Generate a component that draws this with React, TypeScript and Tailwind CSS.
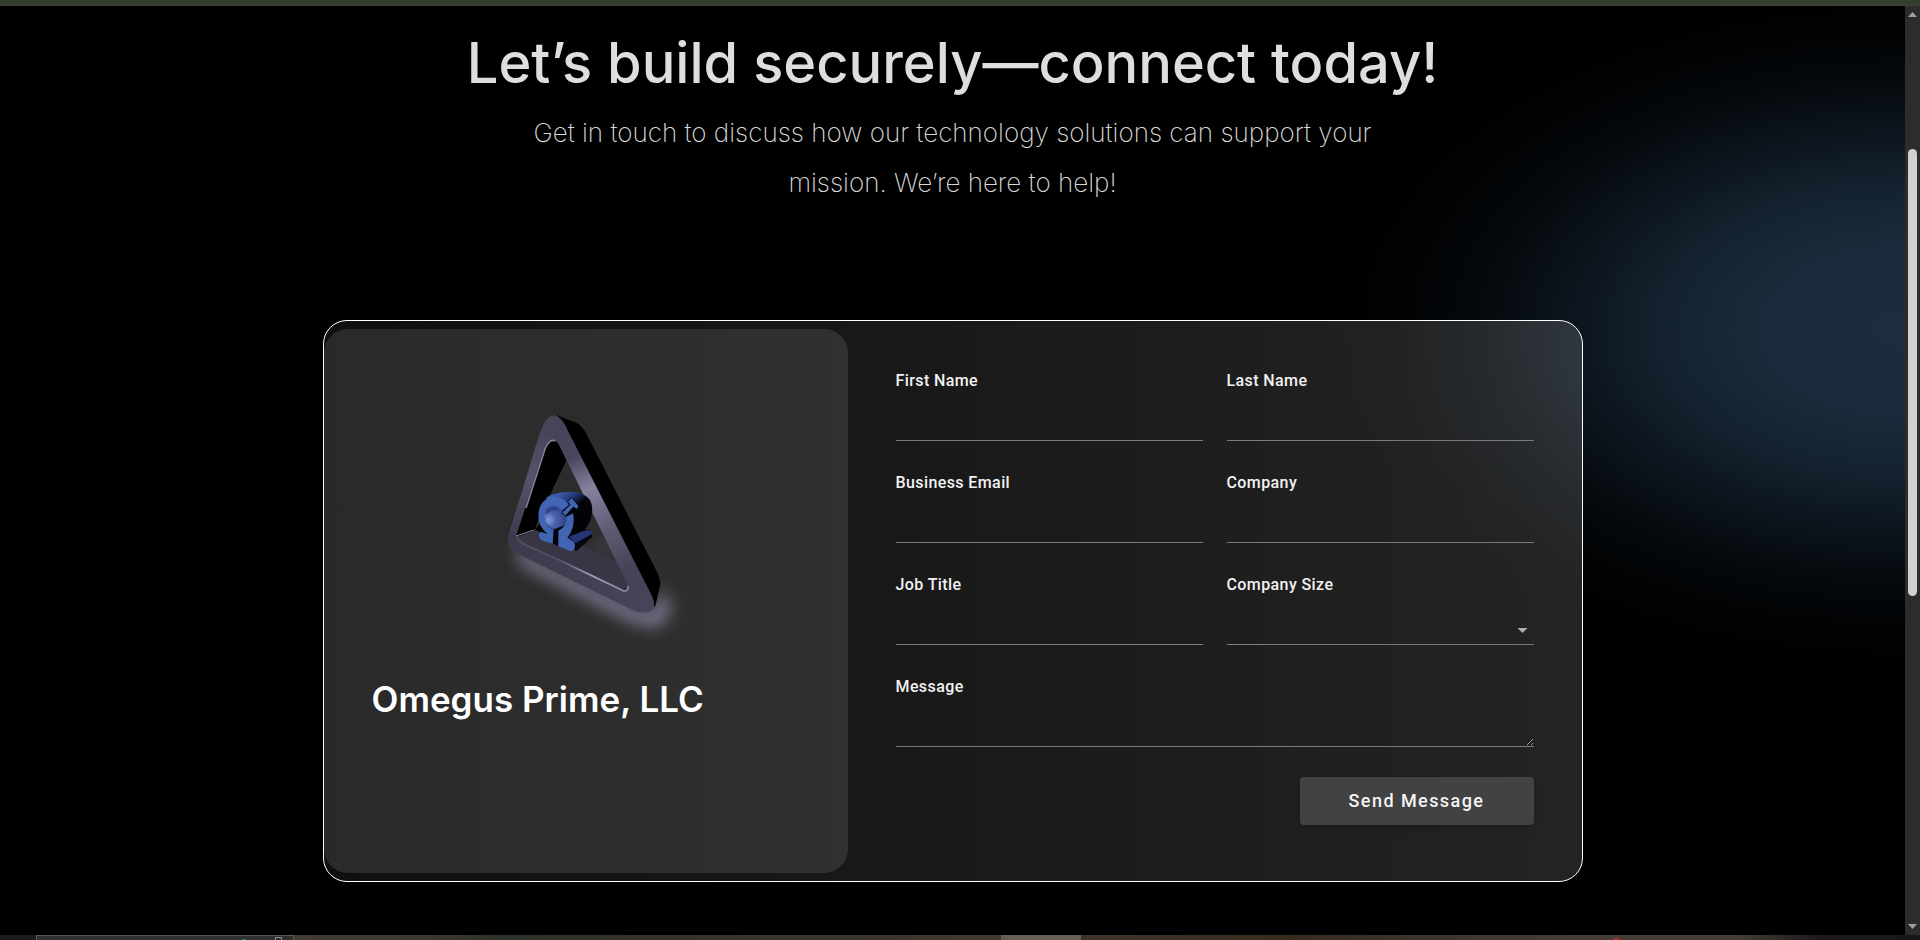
import type { ReactNode } from "react";

const labelClass =
  "block text-base leading-5 font-medium tracking-wide text-[#f2f2f2] font-['Roboto',sans-serif]";
const controlClass =
  "block h-[42px] w-full rounded-none border-0 border-b border-[#7a7a7a] bg-transparent text-base text-white outline-none font-['Roboto',sans-serif]";

function Field({ id, label, children }: { id: string; label: string; children?: ReactNode }) {
  return (
    <div>
      <label htmlFor={id} className={labelClass}>
        {label}
      </label>
      <div className="relative pt-2">
        {children ?? <input id={id} name={id} type="text" className={controlClass} />}
      </div>
    </div>
  );
}

function Emblem() {
  return (
    <svg viewBox="0 0 220 260" className="h-[260px] w-[220px]" role="img" aria-label="Omegus Prime emblem">
      <defs>
        <filter id="soft" x="-30%" y="-40%" width="160%" height="180%">
          <feGaussianBlur stdDeviation="8" />
        </filter>
        <filter id="fine">
          <feGaussianBlur stdDeviation="0.6" />
        </filter>
        <linearGradient id="frame" gradientUnits="userSpaceOnUse" x1="75" y1="30" x2="165" y2="215">
          <stop offset="0" stopColor="#47445a" />
          <stop offset="0.2" stopColor="#4a475d" />
          <stop offset="0.37" stopColor="#8583a0" />
          <stop offset="0.58" stopColor="#5f5c75" />
          <stop offset="0.8" stopColor="#464359" />
          <stop offset="1" stopColor="#47445a" />
        </linearGradient>
        <linearGradient id="leftLeg" gradientUnits="userSpaceOnUse" x1="70" y1="40" x2="35" y2="150">
          <stop offset="0" stopColor="#47445a" />
          <stop offset="0.45" stopColor="#55526b" />
          <stop offset="1" stopColor="#3c394c" />
        </linearGradient>
        <linearGradient id="base" gradientUnits="userSpaceOnUse" x1="30" y1="150" x2="150" y2="205">
          <stop offset="0" stopColor="#3c394c" />
          <stop offset="1" stopColor="#464359" />
        </linearGradient>
        <linearGradient id="edge" gradientUnits="userSpaceOnUse" x1="75" y1="168" x2="148" y2="200">
          <stop offset="0" stopColor="#777391" stopOpacity="0.4" />
          <stop offset="0.5" stopColor="#a5a2bd" />
          <stop offset="1" stopColor="#8582a0" />
        </linearGradient>
        <radialGradient id="orb" cx="0.2" cy="0.6" r="0.8">
          <stop offset="0" stopColor="#8499d4" />
          <stop offset="0.4" stopColor="#4a62ae" />
          <stop offset="1" stopColor="#2e4188" />
        </radialGradient>
        <linearGradient id="barrel" gradientUnits="userSpaceOnUse" x1="235" y1="305" x2="285" y2="375">
          <stop offset="0" stopColor="#3d5fb0" />
          <stop offset="0.4" stopColor="#243979" />
          <stop offset="0.75" stopColor="#020307" />
        </linearGradient>
      </defs>
      <path d="M34 156 L150 214 L172 222 L182 198 L190 212 Q190 238 168 236 Q150 232 128 220 L40 174 Z" fill="#8583a0" opacity="0.85" filter="url(#soft)" />
      <path d="M108 156 L139 170 L128 150 Z" fill="#77758c" opacity="0.35" filter="url(#soft)" />
      <path d="M76 24 L97 32 Q103 36 107 44 L177 181 Q181 189 180 195 L175 216 L160 200 L80 45 Z" fill="#000" />
      <path d="M70 49 Q75 47 79 53 L87 68 L60 125 L54 140 L36 146 L64 58 Z" fill="#000" />
      <path d="M37 146 L56 139 L95 151 L139 171 L150 195 L148 200 L78 171 L42 154 Z" fill="#383545" />
      <path
        fillRule="evenodd"
        fill="url(#frame)"
        d="M65 31 Q70 23 77 25 Q83 28 88 40 L171 203 Q177 216 171 220 Q163 224 151 218 L36 162 Q27 156 29 144 L55 58 Q60 40 65 31 Z M64 58 L36 143 Q35 149 42 153 L78 170 L144 200 Q150 199 146 190 L79 54 Q72 43 64 58 Z"
      />
      <path
        d="M29 143 L36 143 Q35 149 42 153 L78 170 L144 200 L160 221 Q156 220 151 218 L36 162 Q27 156 29 143 Z"
        fill="url(#base)"
      />
      <path d="M65 31 Q70 24 76 25 L76 47 Q70 45 64 58 L36 144 L29 144 L55 58 Q60 40 65 31 Z" fill="url(#leftLeg)" />
      <path d="M75 50 Q70 47 65 58 L46 117" fill="none" stroke="#8582a0" strokeWidth="1.6" filter="url(#fine)" />
      <path d="M37 145 Q37 149 44 153 L75 167 L144 200 Q149 200 148 195" fill="none" stroke="url(#edge)" strokeWidth="1.8" filter="url(#fine)" />
      <path d="M36 145 L54 139" stroke="#8582a0" strokeWidth="1" />
      <g transform="scale(0.33333)">
        <path d="M180 400 L165 415 L180 424 L205 430 Z" fill="#000" />
        <path
          d="M200 319 C225 303 262 301 285 304 C315 308 332 322 336 345 C339 375 330 398 314 414 L334 420 L336 437 L290 479 L260 470 L222 458 L190 420 Z"
          fill="url(#barrel)"
        />
        <path d="M266 437 L318 417 L336 421 L336 430 L287 457 Z" fill="#253677" />
        <path d="M287 457 L336 430 L336 439 L287 479 Z" fill="#06080f" />
        <path d="M221 412 L262 395 L240 424 L236 466 L219 458 Z" fill="#05060c" />
        <path d="M192 362 Q205 342 226 344 L250 362 L262 382 L256 402 L222 415 Q196 406 192 380 Z" fill="url(#orb)" />
        <path d="M196 360 Q208 344 228 348 L238 358 Q214 356 198 370 Z" fill="#2a3f86" opacity="0.8" />
        <path
          d="M177 430 L181 422 L203 429 C180 410 172 385 176 362 C182 328 208 313 232 317 C248 320 260 330 266 342 L244 360 C238 348 225 343 215 345 C200 348 192 362 194 380 C197 403 208 411 221 415 L218 458 L188 449 Q176 444 177 430 Z"
          fill="#4164b3"
        />
        <path
          d="M259 377 L279 367 C285 393 278 424 262 439 L282 453 Q288 462 282 478 L270 480 L235 466 L235 419 C252 410 262 396 259 377 Z"
          fill="#4164b3"
        />
        <path
          d="M245 366 L270 341 L263 332 L275 319 L297 346 L290 355 L280 348 L257 374 Z"
          fill="#4164b3"
          stroke="#090c18"
          strokeWidth="3"
        />
      </g>
    </svg>
  );
}

export default function App() {
  return (
    <div className="flex h-screen flex-col overflow-hidden bg-black font-['Inter',sans-serif]">
      <div className="h-[6px] shrink-0 border-b border-[#40433c] bg-[#343e2f]" />

      <div className="flex min-h-0 flex-1">
        <main className="min-w-0 flex-1 overflow-hidden bg-[radial-gradient(ellipse_580px_345px_at_100%_324px,#1c2d42_0%,#1a2b3b_24%,#14222f_42%,#0c141d_58%,#05090d_73%,#010203_88%,#000_100%)] px-6">
          <header className="mx-auto flex max-w-[1000px] flex-col items-center pt-[23px] text-center">
            <h1 className="text-[56px] leading-[68px] font-medium whitespace-nowrap text-[#dedede]">
              Let’s build securely—connect today!
            </h1>
            <p className="mt-[11px] max-w-[860px] text-[26px] leading-[50px] font-extralight text-[#d8d8d8]">
              Get in touch to discuss how our technology solutions can support your mission. We’re here to help!
            </p>
          </header>

          <section className="mx-auto mt-[112px] flex w-full max-w-[1260px] rounded-3xl border border-white bg-linear-to-r from-white/6 to-white/14 py-2">
            <div className="flex w-[524px] shrink-0 flex-col rounded-3xl bg-white/11 px-12 pt-[62px]">
              <div className="flex justify-center pl-2">
                <Emblem />
              </div>
              <h2 className="mt-6 text-[35px] leading-[48px] font-semibold text-white">Omegus Prime, LLC</h2>
            </div>

            <form className="flex-1 px-12 pt-[42px] pb-12" onSubmit={(e) => e.preventDefault()}>
              <div className="grid grid-cols-2 gap-x-6 gap-y-8">
                <Field id="firstName" label="First Name" />
                <Field id="lastName" label="Last Name" />
                <Field id="businessEmail" label="Business Email" />
                <Field id="company" label="Company" />
                <Field id="jobTitle" label="Job Title" />
                <Field id="companySize" label="Company Size">
                  <select id="companySize" name="companySize" defaultValue="" className={controlClass + " appearance-none"}>
                    <option value="" />
                  </select>
                  <svg viewBox="0 0 10 5" className="pointer-events-none absolute right-[6px] bottom-3 h-[5px] w-[11px]" aria-hidden="true">
                    <path d="M0 0h10L5 5z" fill="#b0b0b0" />
                  </svg>
                </Field>
                <div className="col-span-2">
                  <Field id="message" label="Message">
                    <textarea id="message" name="message" className={controlClass + " resize-y"} />
                  </Field>
                </div>
              </div>
              <div className="mt-[30px] flex justify-end">
                <button
                  type="submit"
                  className="h-12 w-[234px] rounded bg-[#424242] text-lg font-medium tracking-[0.08em] text-[#f5f5f5] shadow-md font-['Roboto',sans-serif]"
                >
                  Send Message
                </button>
              </div>
            </form>
          </section>
        </main>

        <div className="flex w-[15px] shrink-0 flex-col items-center bg-[#2c2c2c] py-[6px]" aria-hidden="true">
          <svg viewBox="0 0 9 5" className="h-[5px] w-[9px]">
            <path d="M0 5h9L4.500 0z" fill="#9f9f9f" />
          </svg>
          <div className="flex w-full flex-1 flex-col items-center pt-[132px]">
            <div className="h-[447px] w-[9px] rounded-full bg-[#d1d1d1]" />
          </div>
          <svg viewBox="0 0 9 5" className="h-[5px] w-[9px]">
            <path d="M0 0h9L4.500 5z" fill="#9f9f9f" />
          </svg>
        </div>
      </div>

      <div className="flex h-[5px] shrink-0 overflow-hidden" aria-hidden="true">
        <div className="w-9 bg-[#1c1c1c]" />
        <div className="flex w-[258px] border border-b-0 border-[#5a5857] bg-[#302f2f]">
          <div className="mt-[3px] ml-[205px] h-px w-1 bg-[#24876b]" />
          <div className="mt-px ml-[29px] h-1 w-[7px] border border-b-0 border-[#8c8c9c]" />
        </div>
        <div className="flex-1 bg-[linear-gradient(to_right,#443b32,#393730_20%,#2e302b_30%,#42372c)]" />
        <div className="w-[80px] bg-[#675e54]" />
        <div className="flex w-[839px] bg-[linear-gradient(to_right,#40342a,#372b20_25%,#453d35_60%,#463d37_78%,#1c1a1a_88%,#171717)]">
          <div className="mt-[3px] ml-[532px] h-1 w-[7px] rounded-t bg-[#c42d1f]" />
        </div>
      </div>
    </div>
  );
}
